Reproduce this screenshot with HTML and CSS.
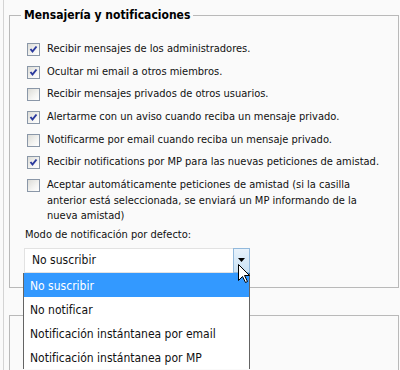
FILE: index.html
```html
<!DOCTYPE html>
<html lang="es">
<head>
<meta charset="utf-8">
<title>Mensajería y notificaciones</title>
<link rel="stylesheet" href="styles.css">
</head>
<body>
<div class="page">
  <fieldset class="box">
    <legend class="box-legend">Mensajería y notificaciones</legend>
    <div class="options">
      <label class="row"><input class="check" type="checkbox" checked><span>Recibir mensajes de los administradores.</span></label>
      <label class="row"><input class="check" type="checkbox" checked><span>Ocultar mi email a otros miembros.</span></label>
      <label class="row"><input class="check" type="checkbox"><span>Recibir mensajes privados de otros usuarios.</span></label>
      <label class="row"><input class="check" type="checkbox" checked><span>Alertarme con un aviso cuando reciba un mensaje privado.</span></label>
      <label class="row"><input class="check" type="checkbox"><span>Notificarme por email cuando reciba un mensaje privado.</span></label>
      <label class="row"><input class="check" type="checkbox" checked><span>Recibir notifications por MP para las nuevas peticiones de amistad.</span></label>
      <label class="row"><input class="check" type="checkbox"><span>Aceptar automáticamente peticiones de amistad (si la casilla anterior está seleccionada, se enviará un MP informando de la nueva amistad)</span></label>
    </div>
    <div class="field-label">Modo de notificación por defecto:</div>
    <div class="select">
      <span class="select-value">No suscribir</span>
      <span class="select-btn"><svg width="7" height="4" viewBox="0 0 7 4"><path d="M0 0H7L3.5 4Z" fill="#000"/></svg></span>
      <ul class="dropdown">
        <li class="opt opt-active">No suscribir</li>
        <li class="opt">No notificar</li>
        <li class="opt">Notificación instántanea por email</li>
        <li class="opt">Notificación instántanea por MP</li>
      </ul>
      <svg class="cursor" width="13" height="20" viewBox="0 0 13 20"><path d="M0.5 0.5V16.5L4.5 12.5L7.5 18.5L9.5 17.5L6.5 11.5H11.5Z" fill="#fff" stroke="#000" stroke-width="1"/></svg>
    </div>
  </fieldset>
  <fieldset class="box box-next"></fieldset>
</div>
</body>
</html>
```
FILE: styles.css
```css
html, body {
  overflow: hidden;
}
body {
  margin: 0;
  background: #fafafa;
  font-family: "DejaVu Sans Condensed", "DejaVu Sans", sans-serif;
  color: #111;
}
.page {
  margin-left: 3px;
  border-left: 1px solid #d4d4d4;
  padding-left: 5px;
  height: 370px;
  box-sizing: border-box;
  overflow: hidden;
}
.box {
  margin: 7px 1px 0 0;
  border: 1px solid #b9b9b9;
  padding: 18px 12px 14px 14px;
  min-width: 0;
}
.box-legend {
  font-weight: bold;
  font-size: 12px;
  line-height: 16px;
  padding: 0 3px;
  margin-left: -3px;
  color: #000;
}
.options {
  display: flex;
  flex-direction: column;
  gap: 7.2px;
}
.row {
  display: flex;
  align-items: flex-start;
  font-size: 11px;
  line-height: 15.5px;
}
.check {
  appearance: none;
  -webkit-appearance: none;
  flex: none;
  width: 13px;
  height: 13px;
  margin: 2px 7px 0 3px;
  box-sizing: border-box;
  border: 1px solid #8a97a8;
  background: linear-gradient(135deg, #dcdcd7 0%, #f4f4f2 60%, #ffffff 100%);
}
.check:checked {
  background-image: url("data:image/svg+xml,%3Csvg xmlns='http://www.w3.org/2000/svg' width='11' height='11' viewBox='0 0 11 11'%3E%3Cpath d='M2.5 5 L4.5 7.5 L8.5 2.5' fill='none' stroke='%232b3a9e' stroke-width='2'/%3E%3C/svg%3E"), linear-gradient(135deg, #dcdcd7 0%, #f4f4f2 60%, #ffffff 100%);
  background-repeat: no-repeat;
}
.field-label {
  margin-top: 3.5px;
  font-size: 11px;
  line-height: 15.5px;
  padding-left: 1px;
}
.select {
  position: relative;
  margin-top: 5px;
  width: 226px;
  height: 25px;
  box-sizing: border-box;
  border: 1px solid #e2e2e2;
  background: #fff;
  font-size: 12px;
  line-height: 23px;
  padding-left: 7px;
}
.select-btn {
  position: absolute;
  left: 208px;
  top: -1px;
  width: 17px;
  height: 25px;
  box-sizing: border-box;
  border: 1px solid #92b9dc;
  background: linear-gradient(#e8f2fb, #c9e2f5);
  display: flex;
  align-items: center;
  justify-content: center;
}
.select-btn svg {
  display: block;
  margin-top: -1px;
}
.dropdown {
  position: absolute;
  left: -2px;
  top: 24px;
  width: 227px;
  margin: 0;
  padding: 0;
  list-style: none;
  background: #fff;
  border: 1px solid #646464;
  border-top: none;
  border-bottom: none;
  box-sizing: border-box;
  z-index: 2;
}
.opt {
  height: 24px;
  box-sizing: border-box;
  padding: 2px 0 0 6px;
  line-height: 22px;
  white-space: nowrap;
}
.opt-active {
  background: #3399ff;
  color: #fff;
}
.cursor {
  position: absolute;
  left: 213px;
  top: 15px;
  z-index: 3;
}
.box-next {
  margin-top: 27px;
  height: 55px;
  padding: 0;
  border-bottom: none;
}
```
